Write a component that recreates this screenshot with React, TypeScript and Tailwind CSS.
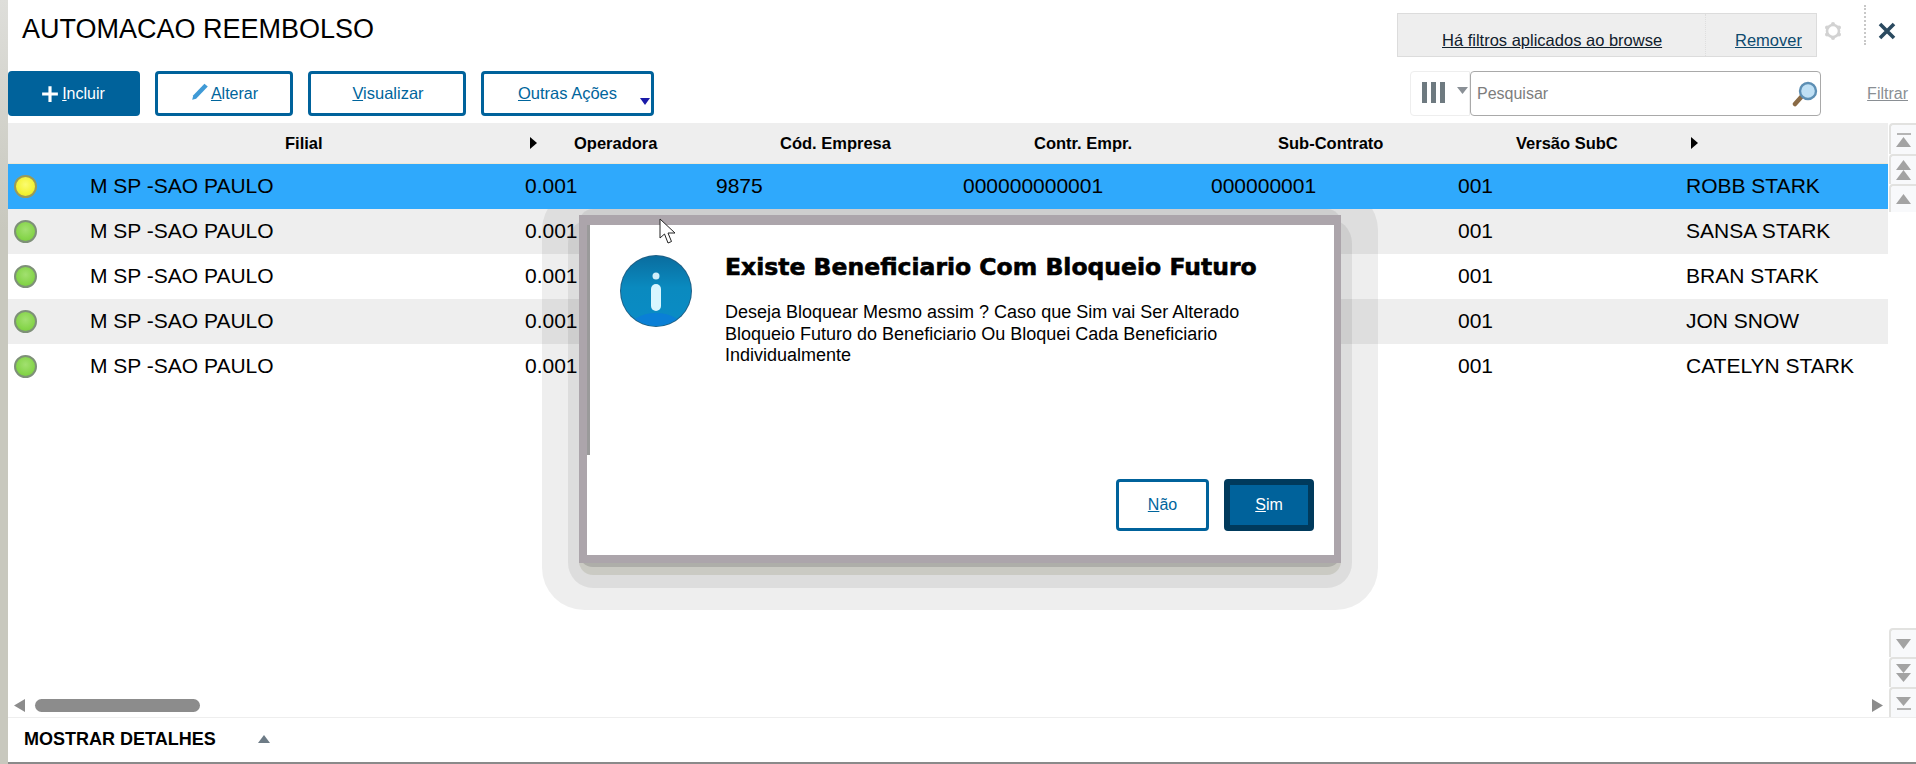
import React from "react";

const cols = "grid grid-cols-[82px_435px_191px_247px_248px_247px_228px_202px]";

const rows = [
  { name: "ROBB STARK", color: "yellow", bg: "bg-[#2fa9fc] relative z-20", first: true },
  { name: "SANSA STARK", color: "green", bg: "bg-[#eeeeee]", first: false },
  { name: "BRAN STARK", color: "green", bg: "bg-white", first: false },
  { name: "JON SNOW", color: "green", bg: "bg-[#eeeeee]", first: false },
  { name: "CATELYN STARK", color: "green", bg: "bg-white", first: false },
];

function Tri({ dir, className }: { dir: "up" | "down" | "left" | "right"; className?: string }) {
  const pts = { up: "0,10 7,0 14,10", down: "0,0 14,0 7,10", left: "10,0 10,14 0,7", right: "0,0 0,14 10,7" }[dir];
  const vb = dir === "up" || dir === "down" ? "0 0 14 10" : "0 0 10 14";
  return (
    <svg viewBox={vb} preserveAspectRatio="none" className={className}>
      <polygon points={pts} fill="currentColor" />
    </svg>
  );
}

function ScrollBtn({ h, children }: { h: string; children: React.ReactNode }) {
  return (
    <div className={`flex flex-col items-center justify-center w-[27px] border-l-2 border-t-2 border-[#e2e2e0] rounded-tl-[4px] bg-[#f8f9fb] text-[#a3a3a3] ${h}`}>
      {children}
    </div>
  );
}

function Dot({ color }: { color: string }) {
  return (
    <div
      className={
        color === "yellow"
          ? "w-[23px] h-[23px] rounded-full border-2 border-[#9a9a58] bg-[radial-gradient(circle_at_50%_40%,#fbfb70,#f2f230_65%,#dcdc30)]"
          : "w-[23px] h-[23px] rounded-full border-2 border-[#7e9078] bg-[radial-gradient(circle_at_50%_40%,#a2e070,#84d448_65%,#70c040)]"
      }
    />
  );
}

function InfoIcon() {
  return (
    <svg viewBox="0 0 72 72" className="w-[72px] h-[72px] shrink-0">
      <defs>
        <linearGradient id="ig" x1="0" y1="0" x2="0" y2="1">
          <stop offset="0" stopColor="#0a6d9f" />
          <stop offset="0.45" stopColor="#0a8abf" />
          <stop offset="1" stopColor="#0a8cc6" />
        </linearGradient>
        <clipPath id="ic">
          <circle cx="36" cy="36" r="35" />
        </clipPath>
      </defs>
      <circle cx="36" cy="36" r="36" fill="#1d5f86" />
      <circle cx="36" cy="36" r="35" fill="url(#ig)" />
      <ellipse cx="36" cy="76" rx="28" ry="18" fill="#0a7fd6" clipPath="url(#ic)" />
      <circle cx="36" cy="21" r="3.5" fill="#cfeefa" />
      <rect x="31" y="29" width="10" height="27" rx="5" fill="#d8f6ff" />
    </svg>
  );
}

export default function App() {
  return (
    <div className="relative flex w-[1916px] h-[764px] overflow-hidden bg-white text-black font-['Liberation_Sans',Arial,sans-serif]">
      <div className="w-2 h-full shrink-0 bg-gradient-to-b from-[#dededa] to-[#c8c8be] to-30%" />
      <div className="flex flex-col flex-1 min-w-0 h-full">
        {/* Top */}
        <div className="flex items-start h-[71px] shrink-0">
          <h1 className="pl-[14px] pt-[11px] text-[27px] leading-[36px] font-normal">AUTOMACAO REEMBOLSO</h1>
          <div className="ml-auto flex items-start">
            <div className="flex mt-[13px] w-[420px] h-[44px] bg-[#eeeeee] border border-[#dcdcdc] text-[16.5px]">
              <div className="flex items-end w-[308px] pb-[3px] pl-[44px] border-r border-dotted border-[#dedede]">
                <span className="underline text-[#10202c]">Há filtros aplicados ao browse</span>
              </div>
              <div className="flex items-end pl-[29px] pb-[3px]">
                <span className="underline text-[#0d4a6e]">Remover</span>
              </div>
            </div>
            <div className="mt-[22px] ml-[7px] w-[18px] h-[18px] text-[#d2d2d2]">
              <svg viewBox="0 0 18 18" className="w-full h-full">
                <circle cx="9" cy="9" r="6" fill="none" stroke="currentColor" strokeWidth="2.6" />
                <circle cx="9" cy="2" r="2" fill="currentColor" />
                <circle cx="9" cy="16" r="2" fill="currentColor" />
                <circle cx="3" cy="5.5" r="2" fill="currentColor" />
                <circle cx="15" cy="5.5" r="2" fill="currentColor" />
                <circle cx="3" cy="12.5" r="2" fill="currentColor" />
                <circle cx="15" cy="12.5" r="2" fill="currentColor" />
              </svg>
            </div>
            <div className="mt-[5px] ml-[22px] h-[40px] border-l-2 border-dotted border-[#c8c8c8]" />
            <div className="mt-[22px] ml-[12px] mr-[20px] w-[18px] h-[18px]">
              <svg viewBox="0 0 18 18" className="w-full h-full">
                <path d="M2 2L16 16M16 2L2 16" stroke="#2b4a60" strokeWidth="3.6" />
              </svg>
            </div>
          </div>
        </div>

        {/* Toolbar */}
        <div className="flex items-stretch h-[45px] shrink-0 gap-[15px] text-[16.5px] text-[#00659c]">
          <button className="flex items-center justify-center w-[132px] rounded-[4px] bg-[#00629b] text-white gap-[3px] pr-[2px] text-[16px]">
            <svg viewBox="0 0 16 16" className="w-[18px] h-[18px]">
              <path d="M8 1V15M1 8H15" stroke="#fff" strokeWidth="2.8" />
            </svg>
            <span><u>I</u>ncluir</span>
          </button>
          <button className="flex items-center justify-center w-[138px] rounded-[4px] border-[3px] border-[#00629b] gap-[1px] text-[16px]">
            <svg viewBox="0 0 18 18" className="w-[20px] h-[20px] -mt-[4px]">
              <path d="M2 16L3 12L13 1.5L16 4L5.5 15Z" fill="#3f9ad6" />
            </svg>
            <span><u>A</u>lterar</span>
          </button>
          <button className="flex items-center justify-center w-[158px] rounded-[4px] border-[3px] border-[#00629b] pl-[2px]">
            <span><u>V</u>isualizar</span>
          </button>
          <button className="relative flex items-center justify-center w-[173px] rounded-[4px] border-[3px] border-[#00629b]">
            <span><u>O</u>utras Ações</span>
            <Tri dir="down" className="absolute right-[1px] bottom-[8px] w-[10px] h-[7px] text-[#1a1aa8]" />
          </button>
          <div className="ml-auto flex items-stretch pr-2 text-[16px]">
            <div className="flex items-center w-[60px] gap-[12px] pl-[11px] border border-[#eeeeee] rounded-l-[4px]">
              <svg viewBox="0 0 23 21" className="w-[23px] h-[21px] -mt-[3px]">
                <rect x="0" y="0" width="5" height="21" fill="#6e7a80" />
                <rect x="9" y="0" width="5" height="21" fill="#6e7a80" />
                <rect x="18" y="0" width="5" height="21" fill="#6e7a80" />
              </svg>
              <Tri dir="down" className="w-[11px] h-[7px] -mt-[6px] text-[#8a9096]" />
            </div>
            <div className="flex items-center w-[351px] pl-[6px] pr-[2px] border border-[#a9a9a9] rounded-[4px] text-[#8a8a8a]">
              <span className="flex-1 text-[#7d7d7d]">Pesquisar</span>
              <svg viewBox="0 0 26 26" className="w-[26px] h-[26px]">
                <path d="M3 23L11 14" stroke="#8a6a45" strokeWidth="4.5" strokeLinecap="round" />
                <circle cx="16" cy="10" r="8" fill="#bfe0f5" stroke="#5d8fb4" strokeWidth="2.4" />
              </svg>
            </div>
            <div className="flex items-center justify-end w-[87px]">
              <span className="underline text-[#8a8f94]">Filtrar</span>
            </div>
          </div>
        </div>

        {/* Grid area */}
        <div className="flex flex-1 min-h-0 mt-[7px]">
          <div className="flex flex-col w-[1880px] shrink-0">
            <div className={`${cols} h-[41px] items-center bg-[#eeeeee] border-b border-[#ede8d5] text-[16.5px] font-bold shrink-0`}>
              <div />
              <div className="pl-[195px]">Filial</div>
              <div className="flex items-center pl-[5px] gap-[37px]">
                <Tri dir="right" className="w-[7px] h-[12px]" />
                <span>Operadora</span>
              </div>
              <div className="pl-[64px]">Cód. Empresa</div>
              <div className="pl-[71px]">Contr. Empr.</div>
              <div className="pl-[67px]">Sub-Contrato</div>
              <div className="pl-[58px]">Versão SubC</div>
              <div className="pl-[5px]"><Tri dir="right" className="w-[7px] h-[12px]" /></div>
            </div>
            {rows.map((r) => (
              <div key={r.name} className={`${cols} h-[45px] items-center text-[21px] pb-[2px] shrink-0 ${r.bg}`}>
                <div className="pl-[6px] pt-[2px]"><Dot color={r.color} /></div>
                <div>M SP -SAO PAULO</div>
                <div>0.001</div>
                <div>{r.first ? "9875" : ""}</div>
                <div>{r.first ? "000000000001" : ""}</div>
                <div>{r.first ? "000000001" : ""}</div>
                <div>001</div>
                <div>{r.name}</div>
              </div>
            ))}
            <div className="mt-auto flex items-center h-[13px] mb-[5px] text-[#8c8c8c] pl-[6px] pr-[5px]">
              <Tri dir="left" className="w-[11px] h-[13px]" />
              <div className="ml-[10px] w-[165px] h-[13px] rounded-full bg-[#8c8c8c]" />
              <Tri dir="right" className="ml-auto w-[11px] h-[13px]" />
            </div>
          </div>
          <div className="flex flex-col justify-between ml-px">
            <div className="flex flex-col">
              <ScrollBtn h="h-[31px]">
                <div className="w-[14px] h-[2px] bg-[#b5b5b5] mb-[2px]" />
                <Tri dir="up" className="w-[15px] h-[10px]" />
              </ScrollBtn>
              <ScrollBtn h="h-[30px]">
                <Tri dir="up" className="w-[15px] h-[10px]" />
                <Tri dir="up" className="w-[15px] h-[10px]" />
              </ScrollBtn>
              <ScrollBtn h="h-[28px]">
                <Tri dir="up" className="w-[15px] h-[10px]" />
              </ScrollBtn>
            </div>
            <div className="flex flex-col">
              <ScrollBtn h="h-[29px]">
                <Tri dir="down" className="w-[15px] h-[10px]" />
              </ScrollBtn>
              <ScrollBtn h="h-[30px]">
                <Tri dir="down" className="w-[15px] h-[9px]" />
                <Tri dir="down" className="w-[15px] h-[9px]" />
              </ScrollBtn>
              <ScrollBtn h="h-[30px]">
                <Tri dir="down" className="w-[15px] h-[9px]" />
                <div className="w-[14px] h-[2px] bg-[#b5b5b5] mt-[2px]" />
              </ScrollBtn>
            </div>
          </div>
        </div>

        {/* Footer */}
        <div className="flex items-center h-[45px] shrink-0 border-t border-[#eeeeee] pl-[16px]">
          <span className="w-[234px] text-[18px] font-bold -mt-[2px]">MOSTRAR DETALHES</span>
          <Tri dir="up" className="w-[12px] h-[8px] -mt-[2px] text-[#6d7b86]" />
        </div>
        <div className="h-[2px] shrink-0 bg-[#8a8a8a]" />
      </div>

      {/* Dialog halo */}
      <div className="absolute z-[5] left-[579px] top-[215px] w-[762px] h-[348px] rounded-[14px] shadow-[0_4px_0_0_rgba(90,90,90,0.25),0_12px_0_0_rgba(90,90,40,0.14),0_14px_0_11px_rgba(0,0,0,0.07),0_10px_0_37px_rgba(0,0,0,0.067),0_-6px_0_0_rgba(0,0,0,0.07)]" />

      {/* Dialog */}
      <div className="absolute z-10 left-[579px] top-[215px] w-[762px] h-[348px] flex flex-col bg-white border-t-[10px] border-l-[8px] border-r-[7px] border-b-[8px] border-[#aca5ab]">
        <div className="flex h-[230px] pl-[30px] pt-[30px] border-l-[3px] border-[#9a9a9a]">
          <InfoIcon />
          <div className="ml-[33px]">
            <h2 className="font-['DejaVu_Sans',sans-serif] font-bold text-[23.5px] leading-[28px] mt-[-2px] [-webkit-text-stroke:0.6px_#000]">Existe Beneficiario Com Bloqueio Futuro</h2>
            <p className="mt-[21px] text-[18px] leading-[21.5px]">
              Deseja Bloquear Mesmo assim ? Caso que Sim vai Ser Alterado
              <br />
              Bloqueio Futuro do Beneficiario Ou Bloquei Cada Beneficiario
              <br />
              Individualmente
            </p>
          </div>
        </div>
        <div className="mt-auto flex justify-end gap-[15px] pr-[20px] pb-[24px] text-[16px]">
          <button className="flex items-center justify-center w-[93px] h-[52px] rounded-[4px] border-[3px] border-[#00629b] text-[#00659c]">
            <span><u>N</u>ão</span>
          </button>
          <button className="flex items-center justify-center w-[90px] h-[52px] rounded-[4px] border-[6px] border-[#003a5c] bg-[#00629b] text-white">
            <span><u>S</u>im</span>
          </button>
        </div>
      </div>

      {/* Mouse cursor */}
      <svg viewBox="0 0 18 27" className="absolute z-30 left-[659px] top-[218px] w-[18px] h-[27px]">
        <path d="M1 1V20L5.5 16L9 25L12.5 23.5L9 15H16Z" fill="#fff" stroke="#222" strokeWidth="1" />
      </svg>
    </div>
  );
}
